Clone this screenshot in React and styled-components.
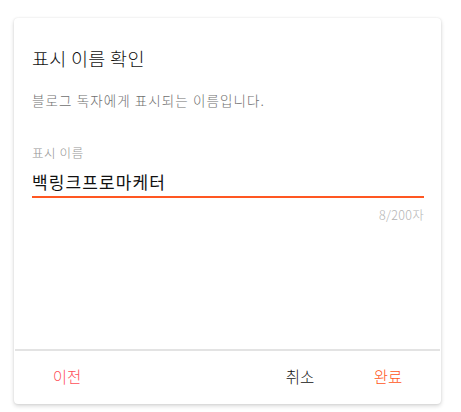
import React from "react";
import styled, { createGlobalStyle } from "styled-components";

const Global = createGlobalStyle`
  html, body { margin: 0; padding: 0; background: #ffffff; }
  body { font-family: "Noto Sans CJK KR", "Noto Sans", sans-serif; font-weight: 300; }
  * { box-sizing: border-box; }
`;

const Page = styled.div`
  width: 461px;
  height: 412px;
  padding: 18px 20px 8px 14px;
`;

const Card = styled.div`
  width: 427px;
  height: 386px;
  background: #fff;
  border-radius: 4px;
  box-shadow: 0 2px 4px rgba(0, 0, 0, 0.16), 0 0 2px rgba(0, 0, 0, 0.1);
  display: flex;
  flex-direction: column;
`;

const Body = styled.div`
  flex: 1;
  padding: 26px 17px 0 18px;
  display: flex;
  flex-direction: column;
`;

const Title = styled.h2`
  margin: 0;
  font-size: 18.5px;
  font-weight: 300;
  line-height: 28px;
  letter-spacing: 0.3px;
  color: #111;
`;

const Desc = styled.p`
  margin: 18px 0 0;
  font-size: 13.5px;
  line-height: 20px;
  letter-spacing: 1.1px;
  color: #707070;
`;

const Field = styled.div`
  margin-top: 35px;
  display: flex;
  flex-direction: column;
`;

const Label = styled.label`
  font-size: 12.5px;
  line-height: 16px;
  letter-spacing: 0.6px;
  color: #959595;
`;

const Value = styled.div`
  margin-top: 8px;
  font-size: 17px;
  font-weight: 400;
  line-height: 25px;
  letter-spacing: 1.1px;
  color: #111;
  padding-bottom: 2px;
  border-bottom: 2px solid #ff5722;
`;

const Counter = styled.div`
  margin-top: 8px;
  text-align: right;
  font-size: 12.5px;
  line-height: 18px;
  letter-spacing: 0.3px;
  color: #b4b4b4;
`;

const Footer = styled.div`
  height: 55px;
  margin: 0 1px;
  border-top: 2px solid #e3e3e3;
  display: flex;
  align-items: center;
  padding: 0 16px 4px;
  gap: 16px;
`;

const Spacer = styled.div`
  flex: 1;
`;

const Button = styled.button`
  width: 72px;
  height: 36px;
  border: none;
  background: transparent;
  font-family: inherit;
  font-weight: 300;
  font-size: 15.5px;
  color: ${(p) => p.$color};
  cursor: pointer;
  padding: 0;
`;

export default function App() {
  return (
    <>
      <Global />
      <Page>
        <Card>
          <Body>
            <Title>표시 이름 확인</Title>
            <Desc>블로그 독자에게 표시되는 이름입니다.</Desc>
            <Field>
              <Label>표시 이름</Label>
              <Value>백링크프로마케터</Value>
              <Counter>8/200자</Counter>
            </Field>
          </Body>
          <Footer>
            <Button $color="#ff4f5a">이전</Button>
            <Spacer />
            <Button $color="#111">취소</Button>
            <Button $color="#ff5722">완료</Button>
          </Footer>
        </Card>
      </Page>
    </>
  );
}
